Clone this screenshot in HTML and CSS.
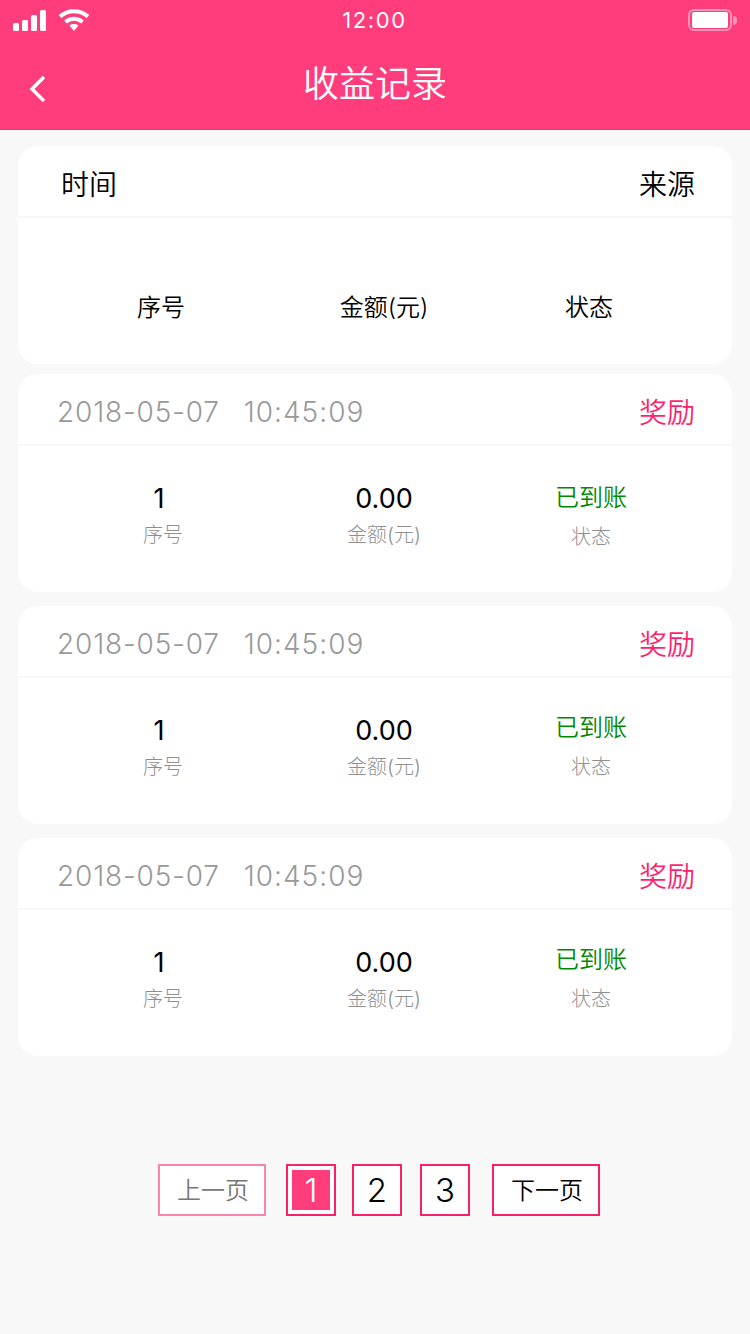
FILE: index.html
```html
<!DOCTYPE html>
<html lang="zh-CN">
<head>
    <meta charset="UTF-8">
    <meta name="viewport" content="width=device-width, initial-scale=1.0">
    <title>收益记录</title>
    <link rel="stylesheet" href="styles.css">
</head>
<body>
    <header class="header">
        <div class="status-bar">
            <div class="status-left">
                <svg class="signal" width="34" height="22" viewBox="0 0 34 22">
                    <rect x="1" y="14" width="6" height="8" rx="1.5"/>
                    <rect x="10" y="11" width="6" height="11" rx="1.5"/>
                    <rect x="19" y="6" width="6" height="16" rx="1.5"/>
                    <rect x="28" y="1" width="6" height="21" rx="1.5"/>
                </svg>
                <svg class="wifi" width="32" height="24" viewBox="0 0 32 24">
                    <path d="M2 8.5C10 1.5 22 1.5 30 8.5" />
                    <path d="M7.5 14C12.5 9.8 19.5 9.8 24.5 14" />
                    <path class="wifi-dot" d="M11.5 17.5C14.2 15.6 17.8 15.6 20.5 17.5L16 23Z" />
                </svg>
            </div>
            <div class="status-time">12:00</div>
            <div class="status-right">
                <div class="battery"><div class="battery-fill"></div></div>
                <div class="battery-cap"></div>
            </div>
        </div>
        <div class="nav-bar">
            <svg class="back" width="20" height="30" viewBox="0 0 20 30">
                <path d="M16 3L4 15L16 27" />
            </svg>
            <h1 class="nav-title">收益记录</h1>
        </div>
    </header>

    <main class="list">
        <section class="card card-first">
            <div class="card-head">
                <span class="head-title">时间</span>
                <span class="head-source">来源</span>
            </div>
            <div class="card-body body-labels">
                <span class="label-dark">序号</span>
                <span class="label-dark">金额(元)</span>
                <span class="label-dark label-state">状态</span>
            </div>
        </section>

        <section class="card card-low">
            <div class="card-head">
                <span class="date">2018-05-07<span class="time">10:45:09</span></span>
                <span class="source">奖励</span>
            </div>
            <div class="card-body">
                <div class="cell cell-first"><span class="value">1</span><span class="label">序号</span></div>
                <div class="cell"><span class="value">0.00</span><span class="label">金额(元)</span></div>
                <div class="cell cell-state"><span class="state">已到账</span><span class="label">状态</span></div>
            </div>
        </section>

        <section class="card">
            <div class="card-head">
                <span class="date">2018-05-07<span class="time">10:45:09</span></span>
                <span class="source">奖励</span>
            </div>
            <div class="card-body">
                <div class="cell cell-first"><span class="value">1</span><span class="label">序号</span></div>
                <div class="cell"><span class="value">0.00</span><span class="label">金额(元)</span></div>
                <div class="cell cell-state"><span class="state">已到账</span><span class="label">状态</span></div>
            </div>
        </section>

        <section class="card">
            <div class="card-head">
                <span class="date">2018-05-07<span class="time">10:45:09</span></span>
                <span class="source">奖励</span>
            </div>
            <div class="card-body">
                <div class="cell cell-first"><span class="value">1</span><span class="label">序号</span></div>
                <div class="cell"><span class="value">0.00</span><span class="label">金额(元)</span></div>
                <div class="cell cell-state"><span class="state">已到账</span><span class="label">状态</span></div>
            </div>
        </section>
    </main>

    <nav class="pager">
        <a class="page-btn page-wide page-disabled">上一页</a>
        <a class="page-btn page-num page-current"><span>1</span></a>
        <a class="page-btn page-num">2</a>
        <a class="page-btn page-num page-three">3</a>
        <a class="page-btn page-wide page-next">下一页</a>
    </nav>
</body>
</html>
```

FILE: styles.css
```css
* {
    box-sizing: border-box;
}
html, body {
    margin: 0;
    padding: 0;
}
body {
    width: 750px;
    height: 1334px;
    overflow: hidden;
    background-color: #f8f8f8;
    font-family: Inter, "Noto Sans CJK SC", sans-serif;
    font-weight: 300;
    color: #000;
}

/* header */
.header {
    height: 130px;
    background: #ff3d7d;
    border-bottom: 1px solid #e8396f;
    color: #fff;
}
.status-bar {
    height: 40px;
    padding: 0 13px 0 12px;
    display: grid;
    grid-template-columns: 1fr auto 1fr;
    align-items: center;
}
.status-left {
    display: flex;
    align-items: center;
    gap: 12px;
}
.signal {
    fill: #fff;
}
.wifi {
    fill: none;
    stroke: #fff;
    stroke-width: 4;
}
.wifi-dot {
    fill: #fff;
    stroke: none;
}
.status-time {
    font-size: 22px;
    font-weight: 400;
    letter-spacing: 1.6px;
}
.status-right {
    display: flex;
    align-items: center;
    justify-content: flex-end;
}
.battery {
    width: 44px;
    height: 22px;
    padding: 1px 2px;
    border: 2px solid rgba(255, 255, 255, 0.45);
    border-radius: 6px;
}
.battery-fill {
    height: 100%;
    background: #fff;
    border-radius: 2px;
}
.battery-cap {
    width: 4px;
    height: 9px;
    margin-left: 1px;
    background: rgba(255, 255, 255, 0.45);
    border-radius: 0 4px 4px 0;
}
.nav-bar {
    height: 89px;
    position: relative;
    display: flex;
    align-items: center;
    justify-content: center;
}
.back {
    position: absolute;
    left: 28px;
    top: 34px;
    fill: none;
    stroke: #fff;
    stroke-width: 3.5;
}
.nav-title {
    margin: 0 0 7px;
    font-size: 36px;
    font-weight: 350;
}

/* cards */
.list {
    padding: 16px 18px 0;
}
.card {
    height: 218px;
    margin-bottom: 14px;
    background: #fff;
    border-radius: 20px;
}
.card-first {
    margin-bottom: 10px;
}
.card-head {
    height: 72px;
    padding: 4px 37px 0 39px;
    display: flex;
    align-items: center;
    justify-content: space-between;
    border-bottom: 2px solid #f6f6f6;
}
.head-title {
    margin-left: 4px;
    font-size: 28px;
    font-weight: 350;
}
.head-source {
    font-size: 28px;
    font-weight: 350;
}
.date {
    padding-top: 2px;
    font-size: 28px;
    letter-spacing: 0.85px;
    color: #999;
}
.time {
    margin-left: 24px;
    letter-spacing: 1px;
}
.source {
    font-size: 28px;
    font-weight: 350;
    color: #ff1f6d;
}
.card-body {
    padding-top: 35px;
    display: grid;
    grid-template-columns: 286px 160px 254px;
    text-align: center;
}
.body-labels {
    padding-top: 74px;
}
.label-dark {
    font-size: 24px;
    font-weight: 350;
    line-height: 32px;
}
.label-state {
    margin-right: 4px;
}
.cell {
    display: flex;
    flex-direction: column;
    align-items: center;
}
.cell-first .value {
    margin-right: 4px;
}
.cell-first .label {
    margin-left: 4px;
}
.value {
    font-size: 27px;
    font-weight: 400;
    line-height: 36px;
}
.state {
    margin-top: -1px;
    font-size: 24px;
    font-weight: 350;
    line-height: 32px;
    color: #008a00;
}
.label {
    margin-top: 4px;
    font-size: 20px;
    line-height: 28px;
    color: #8f8f8f;
}
.cell-state .label {
    margin-top: 9px;
}
.card-low .cell-state {
    margin-top: 2px;
}

/* pager */
.pager {
    margin-top: 108px;
    padding-left: 158px;
    display: flex;
}
.page-btn {
    height: 52px;
    display: flex;
    align-items: center;
    justify-content: center;
    background: #fff;
    border: 2px solid #f8206a;
    font-size: 24px;
    font-weight: 350;
}
.page-wide {
    width: 108px;
    padding: 0 0 3px 2px;
}
.page-num {
    width: 50px;
    margin-left: 16px;
    font-size: 33px;
    font-weight: 350;
}
.page-disabled {
    border-color: #f985ae;
    color: #777;
}
.page-current {
    margin-left: 20px;
    padding: 4px;
    color: #fff;
}
.page-current span {
    width: 100%;
    height: 100%;
    display: flex;
    align-items: center;
    justify-content: center;
    background: #ff3d7d;
}
.page-three {
    margin-left: 18px;
}
.page-next {
    margin-left: 22px;
}
```
